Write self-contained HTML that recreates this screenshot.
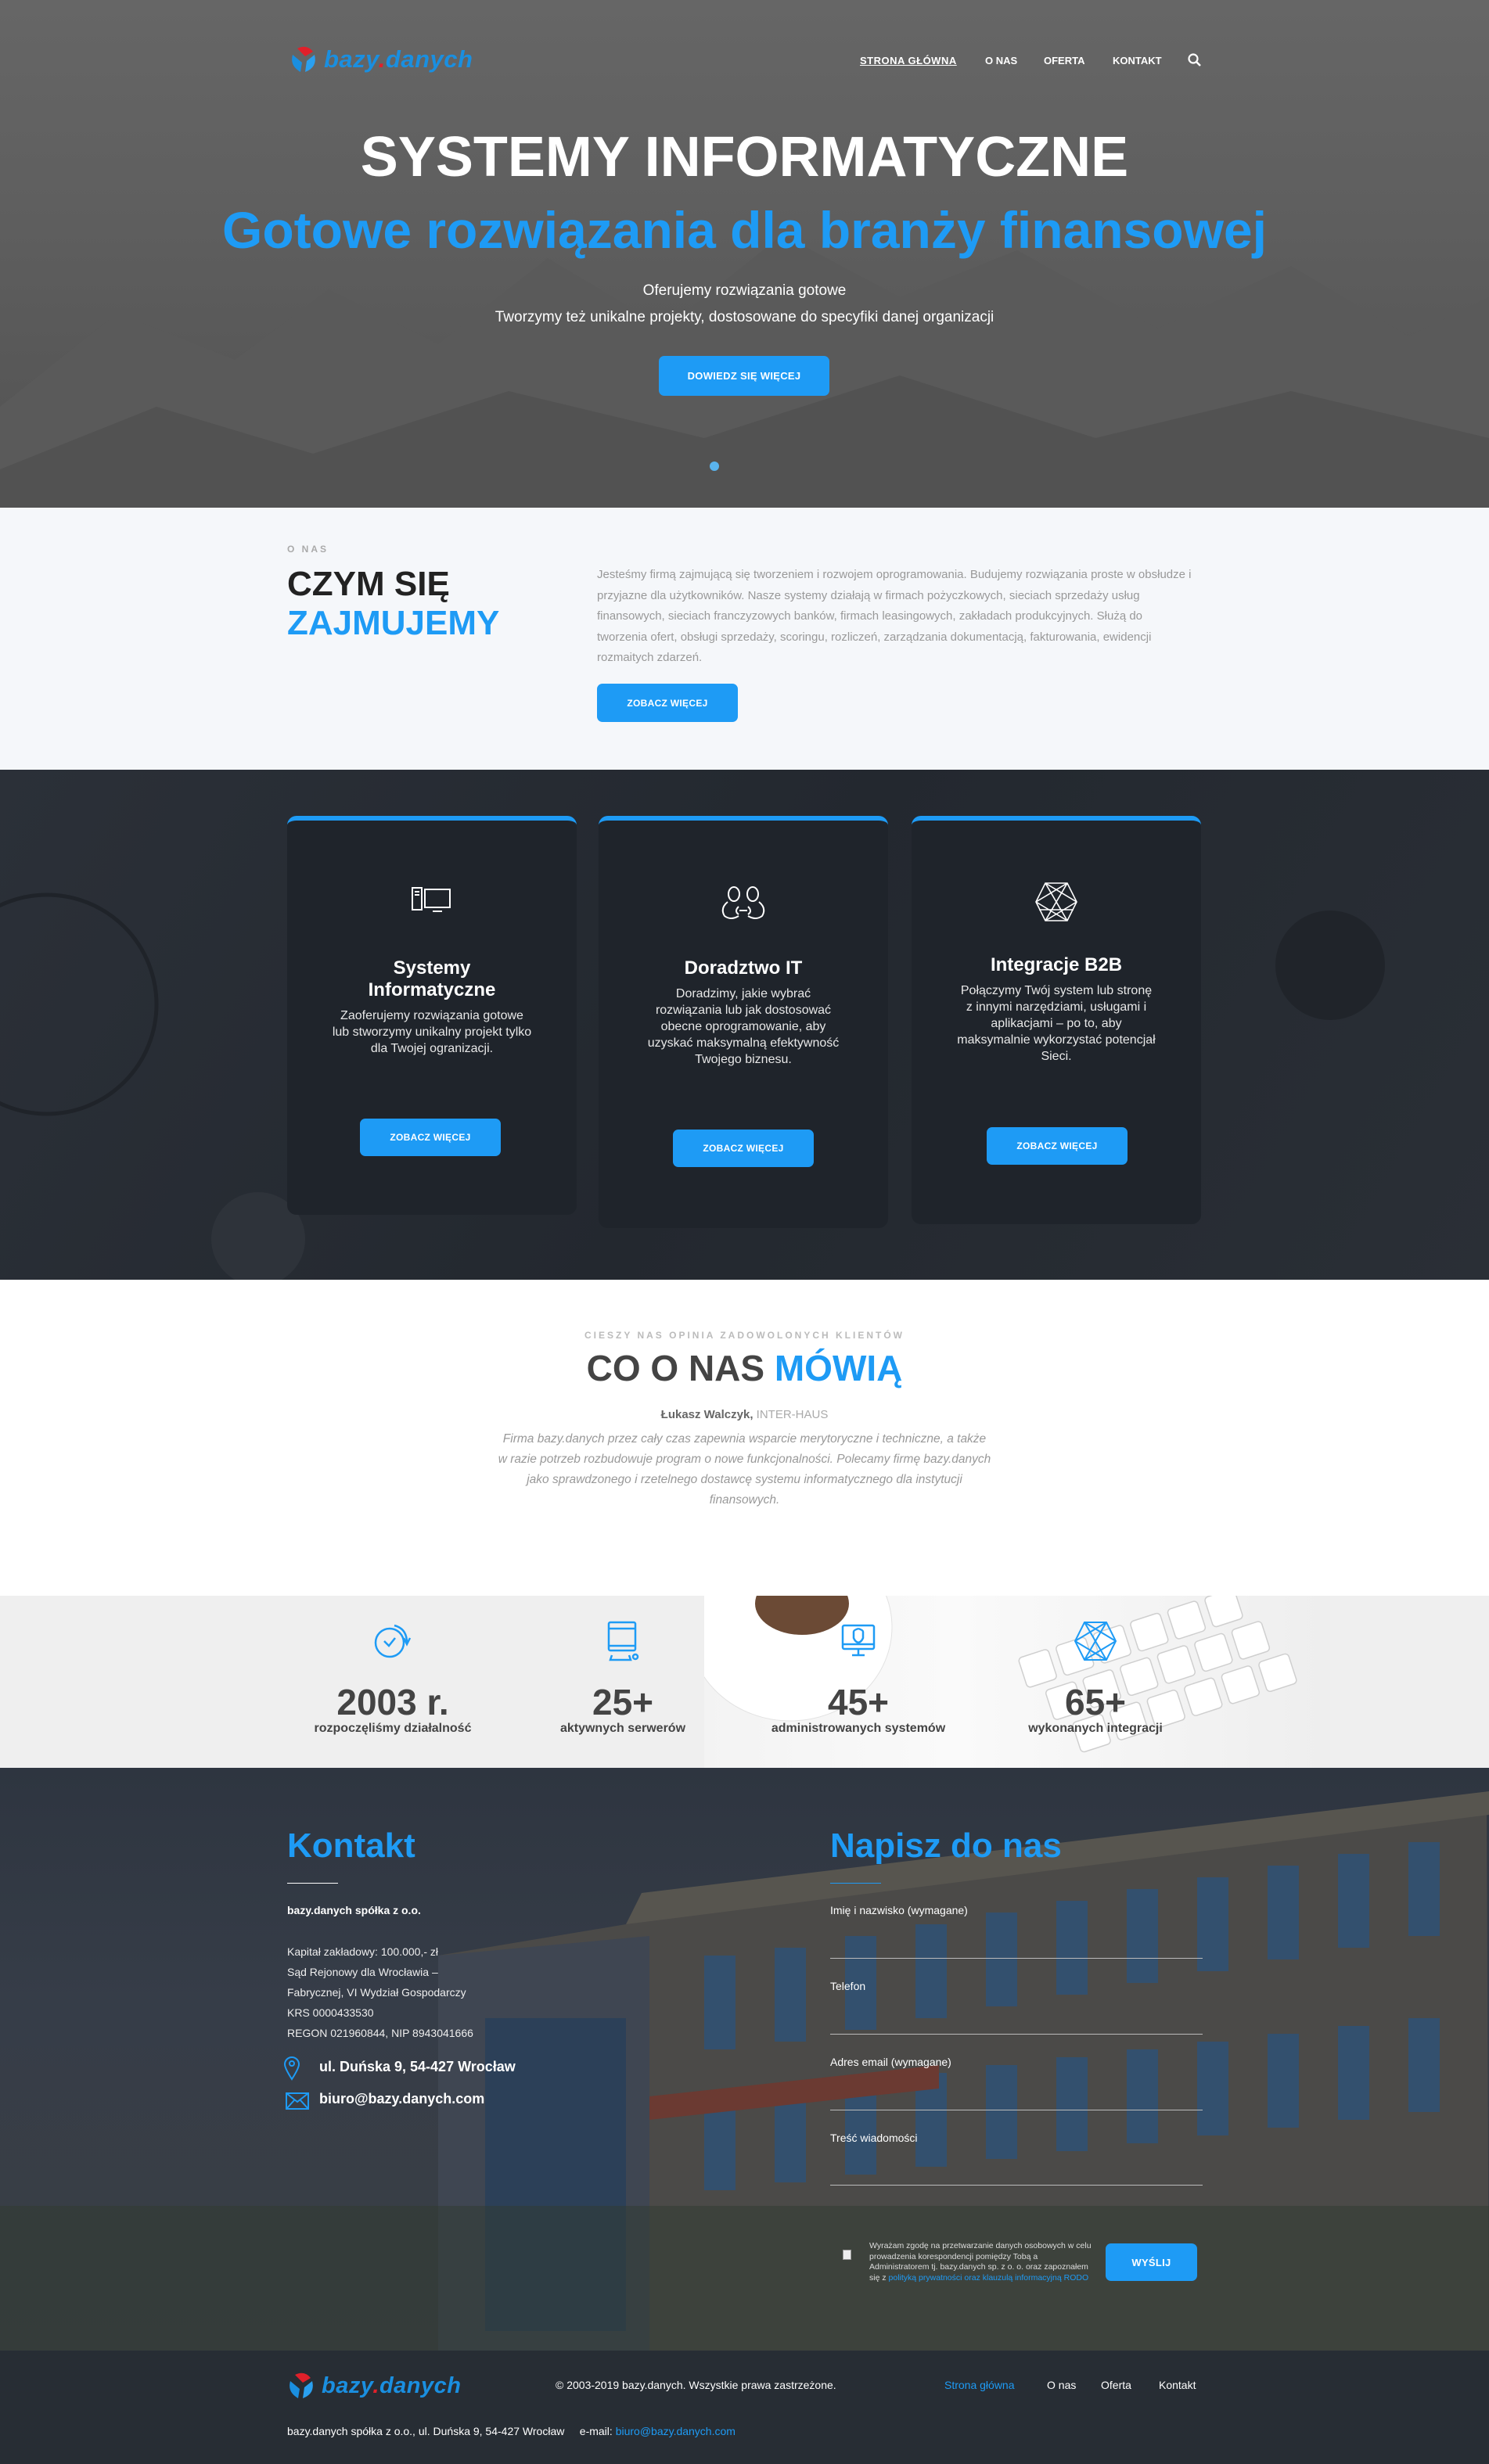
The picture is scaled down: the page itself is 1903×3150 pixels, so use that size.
<!DOCTYPE html>
<html><head><meta charset="utf-8"><style>
*{margin:0;padding:0;box-sizing:border-box}
body{width:1903px;height:3150px;font-family:"Liberation Sans",sans-serif;overflow:hidden;background:#fff}
.abs{position:absolute}
.c{text-align:center}
.btn{position:absolute;background:#1e9bf5;color:#fff;font-weight:bold;font-size:12px;border-radius:7px;display:flex;align-items:center;justify-content:center;letter-spacing:.3px}
.logo{position:absolute;display:flex;align-items:center}
.logo b{font-style:italic;font-size:31px;color:#1a8fe0;margin-left:8px;letter-spacing:.5px}
.logo b i{color:#e0202a}
.card{position:absolute;top:1043px;width:370px;background:#1f242b;border-radius:12px;border-top:6px solid #1e9bf5;color:#fff;text-align:center}
.card h3{font-size:24px;line-height:28px}
.card p{font-size:16px;line-height:21px;color:#e8e8e8;margin:8px auto 0;width:255px}
.stat{position:absolute;top:2072px;width:300px;text-align:center;color:#444}
.stat .n{font-size:46px;font-weight:bold;margin-top:22px;line-height:50px}
.stat .l{font-size:16px;font-weight:bold}
.lbl{position:absolute;left:1061px;color:#fff;font-size:14px}
.ln{position:absolute;left:1061px;width:476px;height:1px;background:#bbb}
</style></head><body>

<!-- HERO -->
<div class="abs" style="left:0;top:0;width:1903px;height:649px;background:linear-gradient(#666 0%,#5f5f5f 40%,#525252 100%);overflow:hidden">
<svg class="abs" style="left:0;top:0" width="1903" height="649"><polygon points="0,520 150,400 300,460 420,370 560,440 700,330 850,420 1000,300 1150,380 1300,320 1480,420 1650,340 1800,430 1903,380 1903,649 0,649" fill="#5a5a5a"/><polygon points="0,600 200,520 400,580 650,500 900,560 1150,480 1400,560 1650,500 1903,560 1903,649 0,649" fill="#525252"/></svg>
</div>
<div class="logo" style="left:370px;top:58px"><svg width="36" height="36" viewBox="0 0 36 36"><path d="M10 4 Q22 -2 30 8 L20 14 Z" fill="#e0202a"/><path d="M4 12 Q0 26 14 34 L16 22 Z" fill="#1a8fe0"/><path d="M32 12 Q36 28 20 34 L22 20 Z" fill="#2aa0f0"/></svg><b>bazy<i>.</i>danych</b></div>
<div class="abs" style="left:1099px;top:70px;font-size:13px;font-weight:bold;color:#fff;letter-spacing:.5px;text-decoration:underline">STRONA GŁÓWNA</div>
<div class="abs" style="left:1259px;top:70px;font-size:13px;font-weight:bold;color:#fff">O NAS</div>
<div class="abs" style="left:1334px;top:70px;font-size:13px;font-weight:bold;color:#fff">OFERTA</div>
<div class="abs" style="left:1422px;top:70px;font-size:13px;font-weight:bold;color:#fff">KONTAKT</div>
<svg class="abs" style="left:1518px;top:68px" width="18" height="18"><circle cx="7" cy="7" r="5.5" stroke="#fff" stroke-width="2.2" fill="none"/><line x1="11" y1="11" x2="16" y2="16" stroke="#fff" stroke-width="2.5"/></svg>
<div class="abs c" style="left:0;width:1903px;top:160px;font-size:72px;font-weight:bold;color:#fff">SYSTEMY INFORMATYCZNE</div>
<div class="abs c" style="left:0;width:1903px;top:256px;font-size:66px;font-weight:bold;color:#1e9bf5">Gotowe rozwiązania dla branży finansowej</div>
<div class="abs c" style="left:0;width:1903px;top:361px;font-size:19px;color:#fff">Oferujemy rozwiązania gotowe</div>
<div class="abs c" style="left:0;width:1903px;top:395px;font-size:19px;color:#fff">Tworzymy też unikalne projekty, dostosowane do specyfiki danej organizacji</div>
<div class="btn" style="left:842px;top:455px;width:218px;height:51px;font-size:13px">DOWIEDZ SIĘ WIĘCEJ</div>
<div class="abs" style="left:907px;top:590px;width:12px;height:12px;border-radius:6px;background:#5ab4ee"></div>

<!-- ABOUT -->
<div class="abs" style="left:0;top:649px;width:1903px;height:335px;background:#f5f7fa"></div>
<div class="abs" style="left:367px;top:695px;font-size:12px;font-weight:bold;color:#aaa;letter-spacing:3px">O NAS</div>
<div class="abs" style="left:367px;top:722px;font-size:44px;font-weight:bold;color:#222;line-height:50px">CZYM SIĘ<br><span style="color:#1e9bf5">ZAJMUJEMY</span></div>
<div class="abs" style="left:763px;top:722px;width:760px;font-size:15px;line-height:26.5px;color:#999">Jesteśmy firmą zajmującą się tworzeniem i rozwojem oprogramowania. Budujemy rozwiązania proste w obsłudze i przyjazne dla użytkowników. Nasze systemy działają w firmach pożyczkowych, sieciach sprzedaży usług finansowych, sieciach franczyzowych banków, firmach leasingowych, zakładach produkcyjnych. Służą do tworzenia ofert, obsługi sprzedaży, scoringu, rozliczeń, zarządzania dokumentacją, fakturowania, ewidencji rozmaitych zdarzeń.</div>
<div class="btn" style="left:763px;top:874px;width:180px;height:49px">ZOBACZ WIĘCEJ</div>

<!-- CARDS -->
<div class="abs" style="left:0;top:984px;width:1903px;height:652px;background:linear-gradient(120deg,#2b3038,#23282f 50%,#2a2f36);overflow:hidden">
<svg class="abs" width="1903" height="652"><circle cx="60" cy="300" r="140" fill="none" stroke="#1f2329" stroke-width="5"/><circle cx="1700" cy="250" r="70" fill="#20242a"/><circle cx="330" cy="600" r="60" fill="#2e333a"/></svg></div>
<div class="card" style="left:367px;height:510px"><svg style="margin-top:84px" width="54" height="36" viewBox="0 0 54 36" fill="none" stroke="#fff" stroke-width="2"><rect x="2" y="2" width="12" height="28"/><line x1="5" y1="7" x2="11" y2="7"/><line x1="5" y1="11" x2="11" y2="11"/><rect x="18" y="4" width="32" height="23"/><line x1="28" y1="32" x2="40" y2="32"/></svg><h3 style="margin-top:50px">Systemy<br>Informatyczne</h3><p>Zaoferujemy rozwiązania gotowe lub stworzymy unikalny projekt tylko dla Twojej ogranizacji.</p><div class="btn" style="left:93px;top:381px;width:180px;height:48px">ZOBACZ WIĘCEJ</div></div>
<div class="card" style="left:765px;height:527px"><svg style="margin-top:82px" width="64" height="46" viewBox="0 0 64 46" fill="none" stroke="#fff" stroke-width="2"><ellipse cx="20" cy="12" rx="7" ry="9"/><ellipse cx="44" cy="12" rx="7" ry="9"/><path d="M12 22 Q2 30 8 40 Q16 46 26 40"/><path d="M52 22 Q62 30 56 40 Q48 46 38 40"/><path d="M26 28 Q20 34 26 38 M38 28 Q44 34 38 38"/><line x1="27" y1="33" x2="37" y2="33"/></svg><h3 style="margin-top:42px">Doradztwo IT</h3><p>Doradzimy, jakie wybrać rozwiązania lub jak dostosować obecne oprogramowanie, aby uzyskać maksymalną efektywność Twojego biznesu.</p><div class="btn" style="left:95px;top:395px;width:180px;height:48px">ZOBACZ WIĘCEJ</div></div>
<div class="card" style="left:1165px;height:522px"><svg style="margin-top:78px" width="56" height="52" viewBox="0 0 56 52" fill="none" stroke="#fff" stroke-width="1.6"><polygon points="14,2 42,2 54,26 42,50 14,50 2,26"/><path d="M14 2 L42 50 M42 2 L14 50 M2 26 L42 2 M2 26 L42 50 M54 26 L14 2 M54 26 L14 50 M6 36 L50 36"/></svg><h3 style="margin-top:36px">Integracje B2B</h3><p>Połączymy Twój system lub stronę z innymi narzędziami, usługami i aplikacjami – po to, aby maksymalnie wykorzystać potencjał Sieci.</p><div class="btn" style="left:96px;top:392px;width:180px;height:48px">ZOBACZ WIĘCEJ</div></div>

<!-- TESTIMONIAL -->
<div class="abs c" style="left:0;width:1903px;top:1700px;font-size:12px;font-weight:bold;color:#bbb;letter-spacing:3px">CIESZY NAS OPINIA ZADOWOLONYCH KLIENTÓW</div>
<div class="abs c" style="left:0;width:1903px;top:1722px;font-size:46px;font-weight:bold;color:#444">CO O NAS <span style="color:#1e9bf5">MÓWIĄ</span></div>
<div class="abs c" style="left:0;width:1903px;top:1800px;font-size:15px;color:#666"><b>Łukasz Walczyk,</b> <span style="color:#aaa">INTER-HAUS</span></div>
<div class="abs c" style="left:636px;width:631px;top:1827px;font-size:15.5px;line-height:26px;font-style:italic;color:#999">Firma bazy.danych przez cały czas zapewnia wsparcie merytoryczne i techniczne, a także w razie potrzeb rozbudowuje program o nowe funkcjonalności. Polecamy firmę bazy.danych jako sprawdzonego i rzetelnego dostawcę systemu informatycznego dla instytucji finansowych.</div>

<!-- STATS -->
<div class="abs" style="left:0;top:2040px;width:1903px;height:220px;background:#efefef"></div>
<div class="abs" style="left:900px;top:2040px;width:800px;height:220px;background:linear-gradient(90deg,#f3f3f3,#fafafa 40%,#eee);overflow:hidden">
<svg width="800" height="220"><ellipse cx="110" cy="40" rx="130" ry="120" fill="#fff" stroke="#e2e2e2"/><ellipse cx="125" cy="10" rx="60" ry="40" fill="#6b4a35"/><g fill="#fff" stroke="#cfcfcf" stroke-width="1.5" transform="rotate(-18 600 110)"><rect x="420" y="20" width="40" height="40" rx="5"/><rect x="470" y="20" width="40" height="40" rx="5"/><rect x="520" y="20" width="40" height="40" rx="5"/><rect x="570" y="20" width="40" height="40" rx="5"/><rect x="620" y="20" width="40" height="40" rx="5"/><rect x="670" y="20" width="40" height="40" rx="5"/><rect x="440" y="70" width="40" height="40" rx="5"/><rect x="490" y="70" width="40" height="40" rx="5"/><rect x="540" y="70" width="40" height="40" rx="5"/><rect x="590" y="70" width="40" height="40" rx="5"/><rect x="640" y="70" width="40" height="40" rx="5"/><rect x="690" y="70" width="40" height="40" rx="5"/><rect x="460" y="120" width="40" height="40" rx="5"/><rect x="510" y="120" width="40" height="40" rx="5"/><rect x="560" y="120" width="40" height="40" rx="5"/><rect x="610" y="120" width="40" height="40" rx="5"/><rect x="660" y="120" width="40" height="40" rx="5"/><rect x="710" y="120" width="40" height="40" rx="5"/></g></svg></div>
<div class="stat" style="left:352px"><svg width="56" height="52" viewBox="0 0 56 52" fill="none" stroke="#1e9bf5" stroke-width="2.5"><circle cx="24" cy="28" r="18"/><path d="M17 26 L23 32 L31 22"/><path d="M30 6 Q46 10 46 28 M42 22 L46 30 L50 22"/></svg><div class="n">2003 r.</div><div class="l">rozpoczęliśmy działalność</div></div>
<div class="stat" style="left:646px"><svg width="56" height="52" viewBox="0 0 56 52" fill="none" stroke="#1e9bf5" stroke-width="2.5"><rect x="10" y="2" width="34" height="36" rx="2"/><line x1="10" y1="10" x2="44" y2="10"/><line x1="10" y1="32" x2="44" y2="32"/><path d="M14 44 L12 50 L38 50 L36 44"/><circle cx="44" cy="46" r="3"/></svg><div class="n">25+</div><div class="l">aktywnych serwerów</div></div>
<div class="stat" style="left:947px"><svg width="56" height="52" viewBox="0 0 56 52" fill="none" stroke="#1e9bf5" stroke-width="2.5"><rect x="8" y="6" width="40" height="30" rx="2"/><line x1="8" y1="30" x2="48" y2="30"/><path d="M28 10 Q22 12 22 14 L22 22 Q24 27 28 28 Q32 27 34 22 L34 14 Q34 12 28 10"/><line x1="28" y1="36" x2="28" y2="44"/><line x1="20" y1="44" x2="36" y2="44"/></svg><div class="n">45+</div><div class="l">administrowanych systemów</div></div>
<div class="stat" style="left:1250px"><svg width="56" height="52" viewBox="0 0 56 52" fill="none" stroke="#1e9bf5" stroke-width="2"><polygon points="14,2 42,2 54,26 42,50 14,50 2,26"/><path d="M14 2 L42 50 M42 2 L14 50 M2 26 L42 2 M2 26 L42 50 M54 26 L14 2 M54 26 L14 50"/></svg><div class="n">65+</div><div class="l">wykonanych integracji</div></div>

<!-- CONTACT -->
<div class="abs" style="left:0;top:2260px;width:1903px;height:745px;background:linear-gradient(#2e3540,#363d48 40%,#3a3e44);overflow:hidden">
<svg class="abs" width="1903" height="745"><polygon points="560,240 800,200 1900,40 1903,745 560,745" fill="#4b4a48"/><polygon points="800,200 820,160 1903,30 1903,60" fill="#57554f"/><polygon points="560,240 560,745 830,745 830,215" fill="#3f4652"/><g fill="#2c4058"><rect x="620" y="320" width="180" height="400"/></g><g fill="#33506e"><rect x="900" y="240" width="40" height="120"/><rect x="990" y="230" width="40" height="120"/><rect x="1080" y="215" width="40" height="120"/><rect x="1170" y="200" width="40" height="120"/><rect x="1260" y="185" width="40" height="120"/><rect x="1350" y="170" width="40" height="120"/><rect x="1440" y="155" width="40" height="120"/><rect x="1530" y="140" width="40" height="120"/><rect x="1620" y="125" width="40" height="120"/><rect x="1710" y="110" width="40" height="120"/><rect x="1800" y="95" width="40" height="120"/><rect x="900" y="420" width="40" height="120"/><rect x="990" y="410" width="40" height="120"/><rect x="1080" y="400" width="40" height="120"/><rect x="1170" y="390" width="40" height="120"/><rect x="1260" y="380" width="40" height="120"/><rect x="1350" y="370" width="40" height="120"/><rect x="1440" y="360" width="40" height="120"/><rect x="1530" y="350" width="40" height="120"/><rect x="1620" y="340" width="40" height="120"/><rect x="1710" y="330" width="40" height="120"/><rect x="1800" y="320" width="40" height="120"/></g><polygon points="830,420 1200,380 1200,410 830,450" fill="#6b3a32"/><rect x="0" y="560" width="1903" height="185" fill="#2f3a30" opacity=".5"/></svg></div>
<div class="abs" style="left:367px;top:2335px;font-size:44px;font-weight:bold;color:#1e9bf5">Kontakt</div>
<div class="abs" style="left:367px;top:2407px;width:65px;height:1px;background:#fff"></div>
<div class="abs" style="left:367px;top:2434px;font-size:14px;font-weight:bold;color:#fff">bazy.danych spółka z o.o.</div>
<div class="abs" style="left:367px;top:2482px;font-size:14px;line-height:26px;color:#eee">Kapitał zakładowy: 100.000,- zł<br>Sąd Rejonowy dla Wrocławia –<br>Fabrycznej, VI Wydział Gospodarczy<br>KRS 0000433530<br>REGON 021960844, NIP 8943041666</div>
<svg class="abs" style="left:362px;top:2628px" width="22" height="32" viewBox="0 0 22 32" fill="none" stroke="#1e9bf5" stroke-width="2"><path d="M11 30 Q2 16 2 11 A9 9 0 0 1 20 11 Q20 16 11 30Z"/><circle cx="11" cy="10" r="3"/></svg>
<div class="abs" style="left:408px;top:2632px;font-size:18px;font-weight:bold;color:#fff">ul. Duńska 9, 54-427 Wrocław</div>
<svg class="abs" style="left:365px;top:2675px" width="30" height="22" viewBox="0 0 30 22" fill="none" stroke="#1e9bf5" stroke-width="2"><rect x="1" y="1" width="28" height="20"/><path d="M1 1 L15 12 L29 1 M1 21 L11 10 M29 21 L19 10"/></svg>
<div class="abs" style="left:408px;top:2673px;font-size:18px;font-weight:bold;color:#fff">biuro@bazy.danych.com</div>

<div class="abs" style="left:1061px;top:2335px;font-size:44px;font-weight:bold;color:#1e9bf5">Napisz do nas</div>
<div class="abs" style="left:1061px;top:2407px;width:65px;height:1px;background:#1e9bf5"></div>
<div class="lbl" style="top:2434px">Imię i nazwisko (wymagane)</div><div class="ln" style="top:2503px"></div>
<div class="lbl" style="top:2531px">Telefon</div><div class="ln" style="top:2600px"></div>
<div class="lbl" style="top:2628px">Adres email (wymagane)</div><div class="ln" style="top:2697px"></div>
<div class="lbl" style="top:2725px">Treść wiadomości</div><div class="ln" style="top:2793px"></div>
<div class="abs" style="left:1077px;top:2876px;width:11px;height:13px;background:#eee;border:1px solid #999"></div>
<div class="abs" style="left:1111px;top:2865px;width:290px;font-size:10.5px;line-height:13.5px;color:#ddd">Wyrażam zgodę na przetwarzanie danych osobowych w celu prowadzenia korespondencji pomiędzy Tobą a Administratorem tj. bazy.danych sp. z o. o. oraz zapoznałem się z <span style="color:#1e9bf5">polityką prywatności oraz klauzulą informacyjną RODO</span></div>
<div class="btn" style="left:1413px;top:2868px;width:117px;height:48px;font-size:13px">WYŚLIJ</div>

<!-- FOOTER -->
<div class="abs" style="left:0;top:3005px;width:1903px;height:145px;background:#272d34"></div>
<div class="logo" style="left:367px;top:3032px"><svg width="36" height="36" viewBox="0 0 36 36"><path d="M10 4 Q22 -2 30 8 L20 14 Z" fill="#e0202a"/><path d="M4 12 Q0 26 14 34 L16 22 Z" fill="#1a8fe0"/><path d="M32 12 Q36 28 20 34 L22 20 Z" fill="#2aa0f0"/></svg><b style="font-size:29px">bazy<i>.</i>danych</b></div>
<div class="abs" style="left:710px;top:3041px;font-size:14px;color:#fff">© 2003-2019 bazy.danych. Wszystkie prawa zastrzeżone.</div>
<div class="abs" style="left:1207px;top:3041px;font-size:14px;color:#1e9bf5">Strona główna</div>
<div class="abs" style="left:1338px;top:3041px;font-size:14px;color:#fff">O nas</div>
<div class="abs" style="left:1407px;top:3041px;font-size:14px;color:#fff">Oferta</div>
<div class="abs" style="left:1481px;top:3041px;font-size:14px;color:#fff">Kontakt</div>
<div class="abs" style="left:367px;top:3100px;font-size:14px;color:#fff">bazy.danych spółka z o.o., ul. Duńska 9, 54-427 Wrocław &nbsp;&nbsp;&nbsp; e-mail: <span style="color:#1e9bf5">biuro@bazy.danych.com</span></div>
</body></html>
